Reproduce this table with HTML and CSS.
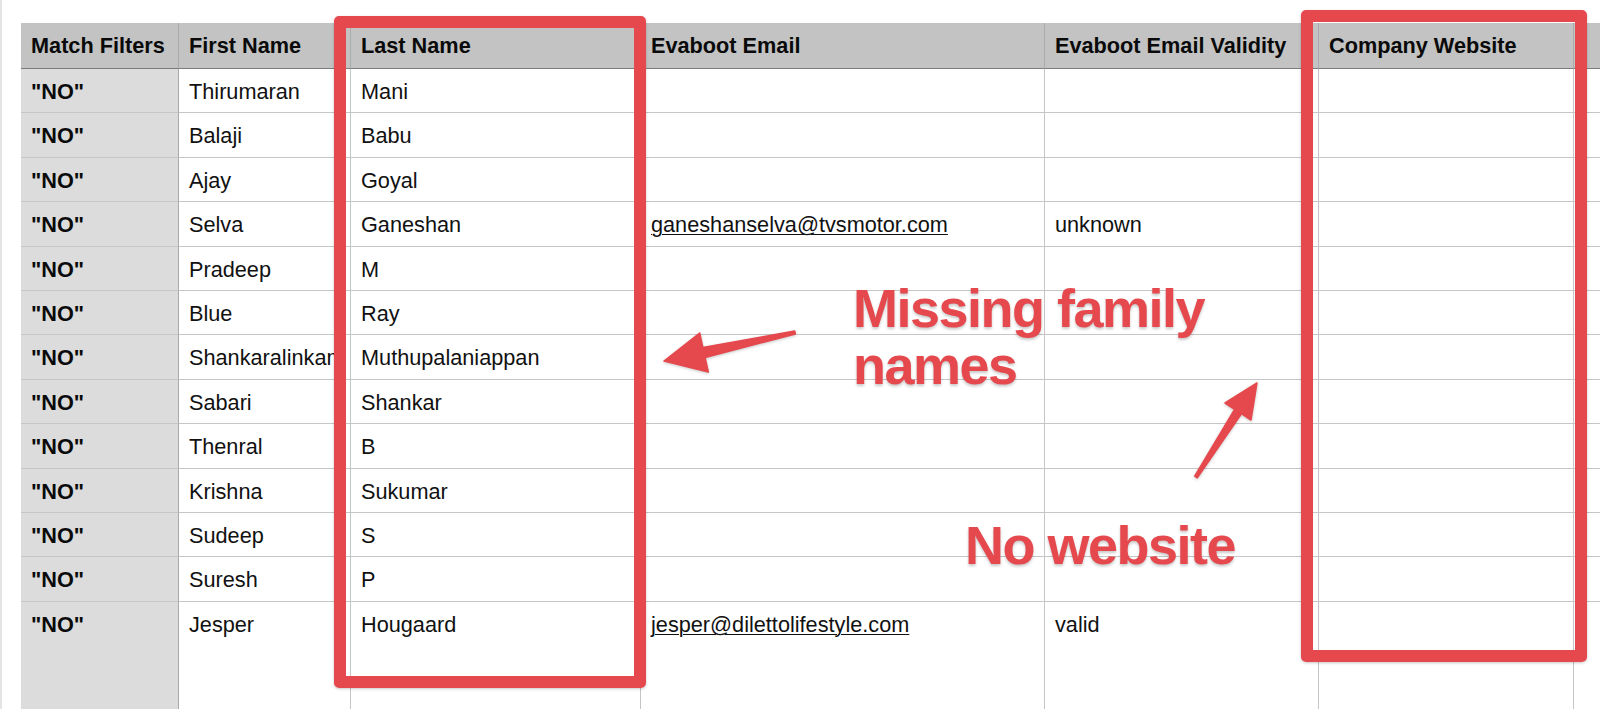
FILE: index.html
```html
<!DOCTYPE html>
<html lang="en">
<head>
<meta charset="utf-8">
<title>Evaboot export</title>
<link rel="stylesheet" href="styles.css">
</head>
<body>
<main class="sheet">
  <table class="grid">
    <thead>
      <tr>
        <th class="c-filter">Match Filters</th>
        <th class="c-first">First Name</th>
        <th class="c-last">Last Name</th>
        <th class="c-email">Evaboot Email</th>
        <th class="c-valid">Evaboot Email Validity</th>
        <th class="c-site">Company Website</th>
        <th class="c-extra"></th>
      </tr>
    </thead>
    <tbody>
      <tr><td class="flag">"NO"</td><td>Thirumaran</td><td>Mani</td><td></td><td></td><td></td><td></td></tr>
      <tr><td class="flag">"NO"</td><td>Balaji</td><td>Babu</td><td></td><td></td><td></td><td></td></tr>
      <tr><td class="flag">"NO"</td><td>Ajay</td><td>Goyal</td><td></td><td></td><td></td><td></td></tr>
      <tr><td class="flag">"NO"</td><td>Selva</td><td>Ganeshan</td><td><a class="mail" href="mailto:ganeshanselva@tvsmotor.com">ganeshanselva@tvsmotor.com</a></td><td>unknown</td><td></td><td></td></tr>
      <tr><td class="flag">"NO"</td><td>Pradeep</td><td>M</td><td></td><td></td><td></td><td></td></tr>
      <tr><td class="flag">"NO"</td><td>Blue</td><td>Ray</td><td></td><td></td><td></td><td></td></tr>
      <tr><td class="flag">"NO"</td><td>Shankaralinkam</td><td>Muthupalaniappan</td><td></td><td></td><td></td><td></td></tr>
      <tr><td class="flag">"NO"</td><td>Sabari</td><td>Shankar</td><td></td><td></td><td></td><td></td></tr>
      <tr><td class="flag">"NO"</td><td>Thenral</td><td>B</td><td></td><td></td><td></td><td></td></tr>
      <tr><td class="flag">"NO"</td><td>Krishna</td><td>Sukumar</td><td></td><td></td><td></td><td></td></tr>
      <tr><td class="flag">"NO"</td><td>Sudeep</td><td>S</td><td></td><td></td><td></td><td></td></tr>
      <tr><td class="flag">"NO"</td><td>Suresh</td><td>P</td><td></td><td></td><td></td><td></td></tr>
      <tr class="last-row"><td class="flag">"NO"</td><td>Jesper</td><td>Hougaard</td><td><a class="mail" href="mailto:jesper@dilettolifestyle.com">jesper@dilettolifestyle.com</a></td><td>valid</td><td></td><td></td></tr>
    </tbody>
  </table>

  <div class="box box-last"></div>
  <div class="box box-site"></div>

  <svg class="arrows" width="1600" height="709" viewBox="0 0 1600 709" aria-hidden="true">
    <polygon class="arrow" points="792.7,331 700.9,347.6 697.7,333 662,361 706.3,372 703.1,357.4 793.3,334"/>
    <polygon class="arrow" points="1192.7,476.2 1232.6,409.3 1223,403 1255,383 1249,420 1239.4,413.7 1195.3,477.8"/>
  </svg>

  <p class="note note-family">Missing family<br>names</p>
  <p class="note note-site">No website</p>
</main>
</body>
</html>
```

FILE: styles.css
```css
html, body {
  margin: 0;
  padding: 0;
  background: #ffffff;
}

.sheet {
  position: relative;
  box-sizing: border-box;
  width: 1600px;
  height: 709px;
  overflow: hidden;
  padding: 23px 0 0 21px;
  border-left: 2px solid #e4e4e4;
  font-family: "Liberation Sans", Arial, sans-serif;
  color: #111111;
}

.grid {
  border-collapse: separate;
  border-spacing: 0;
  table-layout: fixed;
  width: 1680px;
  margin-left: -2px;
}

.grid th,
.grid td {
  box-sizing: border-box;
  padding: 10px 10px 0 10px;
  vertical-align: top;
  text-align: left;
  font-size: 21.7px;
  line-height: 25px;
  white-space: nowrap;
  overflow: hidden;
  border-right: 1px solid #c6c6c6;
  border-bottom: 1px solid #c6c6c6;
}

.grid thead tr {
  height: 46px;
}

.grid th {
  background: #c2c3c2;
  font-weight: bold;
  color: #0a0a0a;
  border-right-color: #aaabaa;
  border-bottom: 1px solid #7c7c7c;
}

.grid tbody tr {
  height: 44.42px;
}

.grid tbody tr.last-row {
  height: 130px;
}

.grid tbody tr.last-row td {
  border-bottom: none;
}

.c-filter { width: 158px; }
.c-first  { width: 172px; }
.c-last   { width: 290px; }
.c-email  { width: 404px; }
.c-valid  { width: 274px; }
.c-site   { width: 255px; }
.c-extra  { width: 127px; }

.grid td.flag {
  background: #dcdcdc;
  font-weight: bold;
  color: #0a0a0a;
  border-right-color: #a9a9a9;
}

.mail {
  color: #111111;
  text-decoration: underline;
  text-decoration-thickness: 1px;
  text-underline-offset: 2px;
}

/* annotations */
.box {
  position: absolute;
  box-sizing: border-box;
  border: 12px solid #e5484d;
  border-radius: 5px;
  box-shadow: 0 1px 3px rgba(0, 0, 0, 0.22);
}

.box-last {
  left: 332px;
  top: 16px;
  width: 312px;
  height: 672px;
}

.box-site {
  left: 1299px;
  top: 10px;
  width: 286px;
  height: 652px;
}

.arrows {
  position: absolute;
  left: 0;
  top: 0;
  pointer-events: none;
  filter: drop-shadow(0 1px 1.5px rgba(0, 0, 0, 0.22));
}

.arrow {
  fill: #e5484d;
  stroke: #e5484d;
  stroke-width: 1.5;
  stroke-linejoin: round;
}

.note {
  position: absolute;
  margin: 0;
  font-family: "Liberation Sans", Arial, sans-serif;
  font-weight: bold;
  font-size: 54px;
  line-height: 57px;
  letter-spacing: -1.5px;
  color: #e5484d;
  white-space: nowrap;
  text-shadow: 0 2px 3px rgba(0, 0, 0, 0.22);
}

.note-family {
  left: 851px;
  top: 280px;
}

.note-site {
  left: 963px;
  top: 517px;
}
```
